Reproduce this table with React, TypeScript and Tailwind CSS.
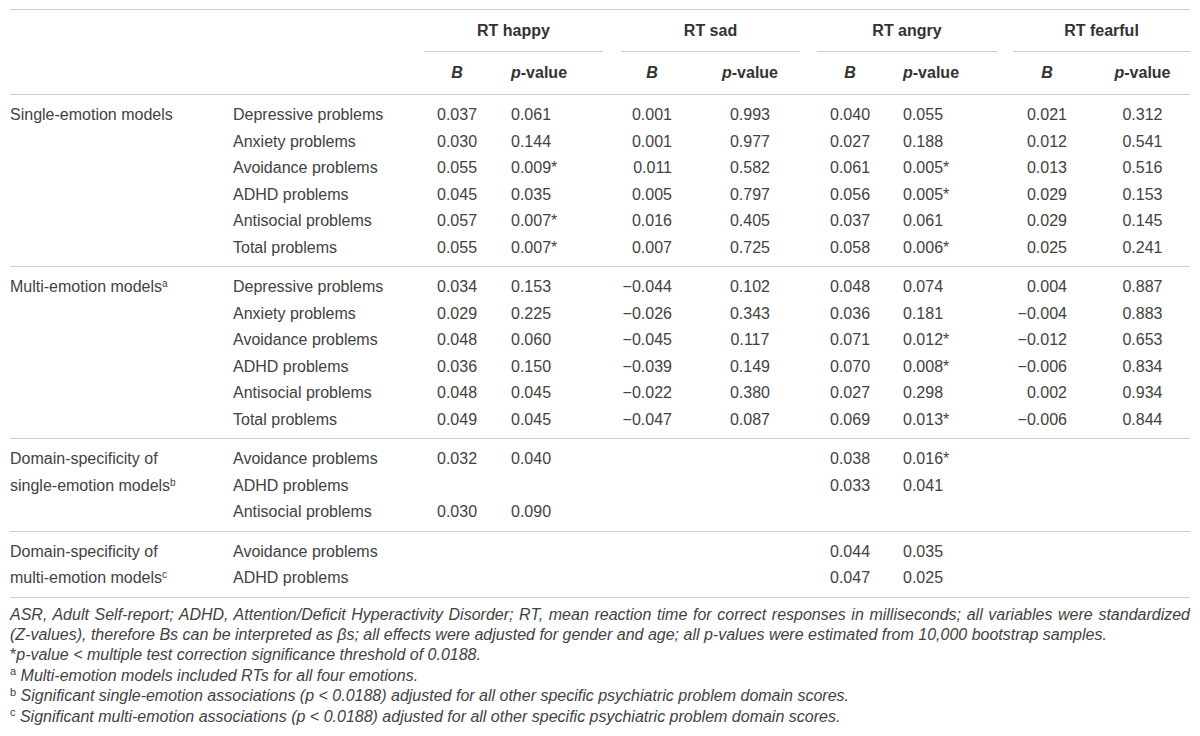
import React from "react";

type Row = { label: string; vals: string[] };
type Group = { title: React.ReactNode; rows: Row[] };

const cols = "grid grid-cols-[223px_191px_76px_103px_97px_100px_95px_102px_98px_95px]";

// alignment for each of the 8 value columns
const cellCls = [
  "pl-[13px]",
  "pl-[11px]",
  "text-right pr-[28px]",
  "text-center",
  "pl-[30px]",
  "pl-[8px]",
  "text-right pr-[28px]",
  "text-center",
];

const groups: Group[] = [
  {
    title: "Single-emotion models",
    rows: [
      { label: "Depressive problems", vals: ["0.037", "0.061", "0.001", "0.993", "0.040", "0.055", "0.021", "0.312"] },
      { label: "Anxiety problems", vals: ["0.030", "0.144", "0.001", "0.977", "0.027", "0.188", "0.012", "0.541"] },
      { label: "Avoidance problems", vals: ["0.055", "0.009*", "0.011", "0.582", "0.061", "0.005*", "0.013", "0.516"] },
      { label: "ADHD problems", vals: ["0.045", "0.035", "0.005", "0.797", "0.056", "0.005*", "0.029", "0.153"] },
      { label: "Antisocial problems", vals: ["0.057", "0.007*", "0.016", "0.405", "0.037", "0.061", "0.029", "0.145"] },
      { label: "Total problems", vals: ["0.055", "0.007*", "0.007", "0.725", "0.058", "0.006*", "0.025", "0.241"] },
    ],
  },
  {
    title: (
      <>
        Multi-emotion models<sup className="text-[10px]">a</sup>
      </>
    ),
    rows: [
      { label: "Depressive problems", vals: ["0.034", "0.153", "−0.044", "0.102", "0.048", "0.074", "0.004", "0.887"] },
      { label: "Anxiety problems", vals: ["0.029", "0.225", "−0.026", "0.343", "0.036", "0.181", "−0.004", "0.883"] },
      { label: "Avoidance problems", vals: ["0.048", "0.060", "−0.045", "0.117", "0.071", "0.012*", "−0.012", "0.653"] },
      { label: "ADHD problems", vals: ["0.036", "0.150", "−0.039", "0.149", "0.070", "0.008*", "−0.006", "0.834"] },
      { label: "Antisocial problems", vals: ["0.048", "0.045", "−0.022", "0.380", "0.027", "0.298", "0.002", "0.934"] },
      { label: "Total problems", vals: ["0.049", "0.045", "−0.047", "0.087", "0.069", "0.013*", "−0.006", "0.844"] },
    ],
  },
  {
    title: (
      <>
        Domain-specificity of
        <br />
        single-emotion models<sup className="text-[10px]">b</sup>
      </>
    ),
    rows: [
      { label: "Avoidance problems", vals: ["0.032", "0.040", "", "", "0.038", "0.016*", "", ""] },
      { label: "ADHD problems", vals: ["", "", "", "", "0.033", "0.041", "", ""] },
      { label: "Antisocial problems", vals: ["0.030", "0.090", "", "", "", "", "", ""] },
    ],
  },
  {
    title: (
      <>
        Domain-specificity of
        <br />
        multi-emotion models<sup className="text-[10px]">c</sup>
      </>
    ),
    rows: [
      { label: "Avoidance problems", vals: ["", "", "", "", "0.044", "0.035", "", ""] },
      { label: "ADHD problems", vals: ["", "", "", "", "0.047", "0.025", "", ""] },
    ],
  },
];

const emotions = [
  { name: "RT happy", ml: "" },
  { name: "RT sad", ml: "ml-[18px]" },
  { name: "RT angry", ml: "ml-[17px]" },
  { name: "RT fearful", ml: "ml-[16px]" },
];

function BHead() {
  return <span className="inline-block w-[40px] text-center font-bold italic">B</span>;
}

function PHead() {
  return (
    <span className="font-bold">
      <i>p</i>-value
    </span>
  );
}

export default function App() {
  return (
    <div className="w-[1200px] h-[736px] bg-white px-[10px] pt-[9px] font-['Liberation_Sans',Arial,sans-serif] text-[16px] text-[#424242] overflow-hidden">
      {/* header row: emotion groups */}
      <div className={`${cols} border-t border-[#cccccc] h-[43px]`}>
        <div />
        <div />
        {emotions.map((e) => (
          <div key={e.name} className="col-span-2 flex">
            <div className={`${e.ml} flex-1 border-b border-[#cccccc] flex items-center justify-center font-bold text-[#333]`}>
              {e.name}
            </div>
          </div>
        ))}
      </div>

      {/* header row: B / p-value */}
      <div className={`${cols} border-b border-[#cccccc] h-[43px] items-center text-[#333]`}>
        <div />
        <div />
        {cellCls.map((c, i) => (
          <div key={i} className={c}>
            {i % 2 === 0 ? <BHead /> : <PHead />}
          </div>
        ))}
      </div>

      {groups.map((g, gi) => (
        <div key={gi} className={`${cols} border-b border-[#cccccc] pt-[7px] pb-[5px] leading-[26.5px]`}>
          <div className="leading-[26.5px]" style={{ gridRow: `span ${g.rows.length}` }}>
            {g.title}
          </div>
          {g.rows.map((r, ri) => (
            <React.Fragment key={ri}>
              <div className="h-[26.5px]">{r.label}</div>
              {r.vals.map((v, vi) => (
                <div key={vi} className={`h-[26.5px] ${cellCls[vi]}`}>
                  {v}
                </div>
              ))}
            </React.Fragment>
          ))}
        </div>
      ))}

      {/* footnotes */}
      <div className="mt-[7px] text-[16px] leading-[20.4px] italic text-[#424242]">
        <p className="text-justify [text-align-last:justify]">
          ASR, Adult Self-report; ADHD, Attention/Deficit Hyperactivity Disorder; RT, mean reaction time for correct responses in milliseconds; all variables were standardized
        </p>
        <p>
          (Z-values), therefore Bs can be interpreted as βs; all effects were adjusted for gender and age; all p-values were estimated from 10,000 bootstrap samples.
        </p>
        <p>
          <span className="not-italic">*</span>p-value &lt; multiple test correction significance threshold of 0.0188.
        </p>
        <p>
          <sup className="not-italic text-[11px]">a</sup> Multi-emotion models included RTs for all four emotions.
        </p>
        <p>
          <sup className="not-italic text-[11px]">b</sup> Significant single-emotion associations (p &lt; 0.0188) adjusted for all other specific psychiatric problem domain scores.
        </p>
        <p>
          <sup className="not-italic text-[11px]">c</sup> Significant multi-emotion associations (p &lt; 0.0188) adjusted for all other specific psychiatric problem domain scores.
        </p>
      </div>
    </div>
  );
}
